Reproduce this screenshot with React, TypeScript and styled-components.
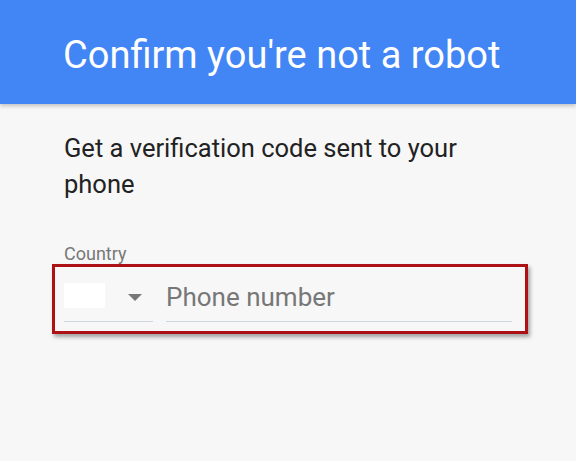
import styled, { createGlobalStyle } from 'styled-components';

const GlobalStyle = createGlobalStyle`
  html, body {
    margin: 0;
    padding: 0;
    background: #f7f7f7;
    font-family: Roboto, 'Noto Sans', sans-serif;
  }
`;

const Page = styled.div`
  width: 576px;
  height: 461px;
  background: #f7f7f7;
  overflow: hidden;
`;

const Header = styled.header`
  height: 104px;
  box-sizing: border-box;
  padding: 33px 0 0 63px;
  background: #4285f4;
  box-shadow: 0 2px 4px rgba(0, 0, 0, 0.22);
  position: relative;
`;

const Title = styled.h1`
  margin: 0;
  font-size: 38px;
  line-height: 44px;
  font-weight: 400;
  color: #ffffff;
`;

const Content = styled.main`
  padding: 26px 0 0 64px;
`;

const Lead = styled.p`
  margin: 0;
  width: 440px;
  font-size: 25.5px;
  line-height: 36px;
  color: #222222;
`;

const Label = styled.div`
  margin-top: 42px;
  font-size: 18px;
  line-height: 20px;
  color: #777777;
`;

const Highlight = styled.div`
  margin-left: -12px;
  width: 476px;
  height: 70px;
  box-sizing: border-box;
  border: 3px solid #ad1116;
  box-shadow: 2px 3px 4px rgba(0, 0, 0, 0.35);
  padding: 15px 13px 0 9px;
  display: flex;
  gap: 13px;
`;

const CountryPicker = styled.div`
  width: 89px;
  height: 40px;
  box-sizing: border-box;
  border-bottom: 1px solid #cdd6de;
  padding-top: 1px;
  display: flex;
  align-items: flex-start;
`;

const Flag = styled.div`
  width: 41px;
  height: 25px;
  background: #ffffff;
`;

const Caret = styled.div`
  margin: 11px 0 0 23px;
  width: 0;
  height: 0;
  border-left: 7px solid transparent;
  border-right: 7px solid transparent;
  border-top: 7px solid #777777;
`;

const PhoneField = styled.div`
  flex: 1;
  height: 40px;
  box-sizing: border-box;
  border-bottom: 1px solid #cdd6de;
  font-size: 26px;
  line-height: 30px;
  color: #777777;
`;

export default function App() {
  return (
    <Page>
      <GlobalStyle />
      <Header>
        <Title>Confirm you're not a robot</Title>
      </Header>
      <Content>
        <Lead>Get a verification code sent to your phone</Lead>
        <Label>Country</Label>
        <Highlight>
          <CountryPicker>
            <Flag />
            <Caret />
          </CountryPicker>
          <PhoneField>Phone number</PhoneField>
        </Highlight>
      </Content>
    </Page>
  );
}
